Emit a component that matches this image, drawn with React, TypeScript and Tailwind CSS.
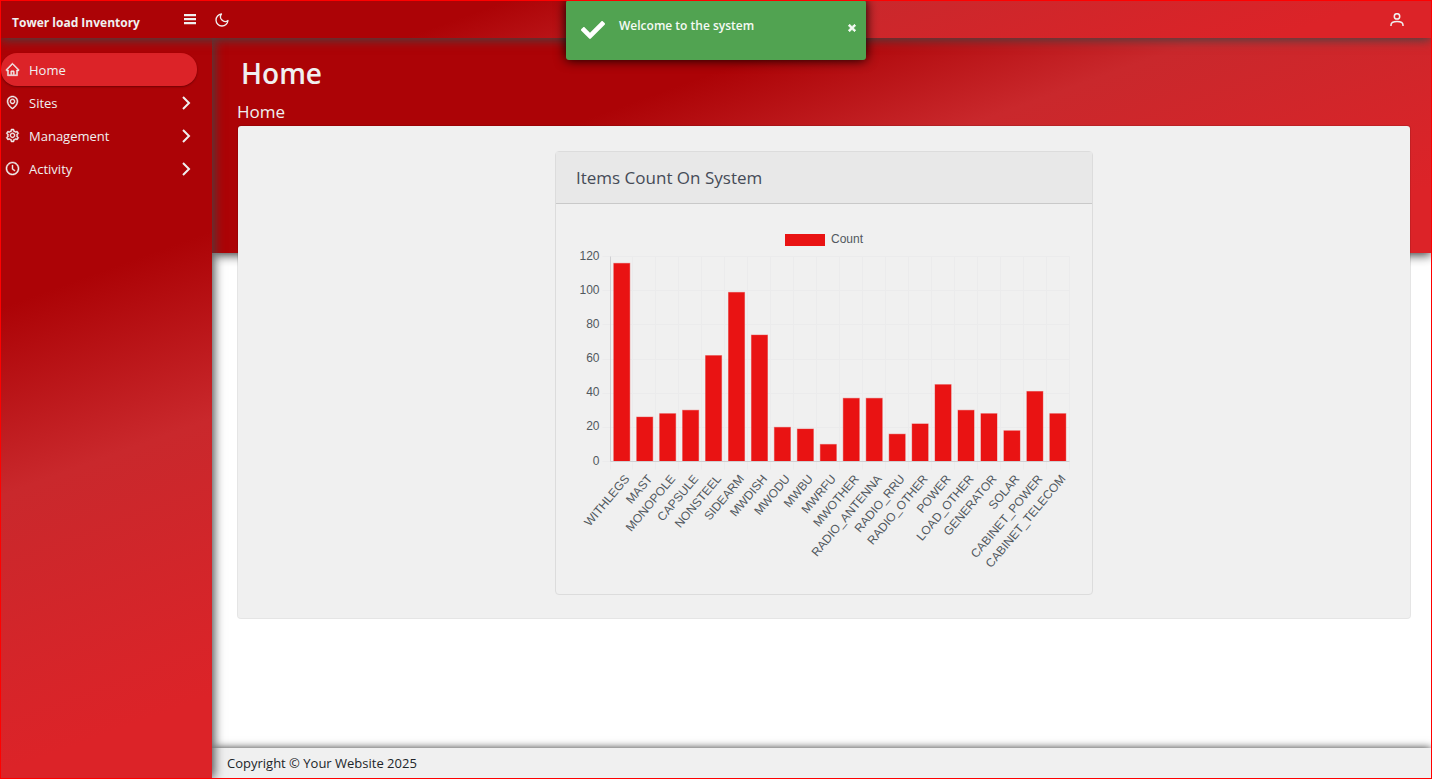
import React from "react";
import {
  AiOutlineHome,
  AiOutlineEnvironment,
  AiOutlineSetting,
  AiOutlineClockCircle,
} from "react-icons/ai";
import { FiMoon } from "react-icons/fi";
import { FaCheck, FaTimes } from "react-icons/fa";

const navItems = [
  { label: "Home", icon: AiOutlineHome, active: true },
  { label: "Sites", icon: AiOutlineEnvironment, active: false },
  { label: "Management", icon: AiOutlineSetting, active: false },
  { label: "Activity", icon: AiOutlineClockCircle, active: false },
];

const counts: [string, number][] = [
  ["WITHLEGS", 116],
  ["MAST", 26],
  ["MONOPOLE", 28],
  ["CAPSULE", 30],
  ["NONSTEEL", 62],
  ["SIDEARM", 99],
  ["MWDISH", 74],
  ["MWODU", 20],
  ["MWBU", 19],
  ["MWRFU", 10],
  ["MWOTHER", 37],
  ["RADIO_ANTENNA", 37],
  ["RADIO_RRU", 16],
  ["RADIO_OTHER", 22],
  ["POWER", 45],
  ["LOAD_OTHER", 30],
  ["GENERATOR", 28],
  ["SOLAR", 18],
  ["CABINET_POWER", 41],
  ["CABINET_TELECOM", 28],
];

const ticks = [0, 20, 40, 60, 80, 100, 120];

function Chart() {
  const left = 34.5;
  const right = 493.5;
  const top = 32.5;
  const bottom = 237.5;
  const step = (right - left) / counts.length;
  const y = (v: number) => bottom - (v / 120) * (bottom - top);
  const barWidth = step * 0.7;

  return (
    <svg
      viewBox="0 0 496 350"
      className="block w-full font-['Liberation_Sans',Arial,sans-serif] text-xs"
      role="img"
      aria-label="Items count by type"
    >
      <rect x="209" y="10" width="40" height="12" fill="#e91313" />
      <text x="255" y="19" fill="#51585e">
        Count
      </text>
      {ticks.map((t) => (
        <g key={t}>
          <line
            x1={left - 8}
            x2={right}
            y1={Math.floor(y(t)) + 0.5}
            y2={Math.floor(y(t)) + 0.5}
            stroke="#ebebec"
          />
          <text x={left - 11} y={Math.round(y(t) + 3)} textAnchor="end" fill="#51585e">
            {t}
          </text>
        </g>
      ))}
      {counts.concat([["", 0]]).map((_, i) => {
        const x = Math.round(left + i * step) - 0.5;
        return <line key={i} x1={x} x2={x} y1={top} y2={bottom + 8} stroke="#ebebec" />;
      })}
      {counts.map(([label, value], i) => {
        const cx = left + (i + 0.5) * step;
        return (
          <g key={label}>
            <rect
              x={cx - barWidth / 2 - 0.2}
              y={y(value)}
              width={barWidth}
              height={bottom - y(value)}
              fill="#e91313"
              stroke="#e91313"
              strokeOpacity="0.4"
            />
            <text
              transform={`translate(${cx + 5} ${bottom + 15}) rotate(-50)`}
              textAnchor="end"
              dominantBaseline="central"
              fill="#51585e"
            >
              {label}
            </text>
          </g>
        );
      })}
      <path d={`M${left} ${top}V${bottom}H${right}`} fill="none" stroke="#cfcfd2" />
    </svg>
  );
}

export default function App() {
  return (
    <div className="relative flex min-h-screen flex-col bg-white p-px font-['Open_Sans','Noto_Sans',sans-serif] text-[#f0f0f0]">
      <header className="relative z-20 flex h-[37px] items-center bg-[linear-gradient(160deg,#ac0306_33%,#c9282c_55%,#dc2328_90%)] shadow-[0_2px_10px_#444]">
        <a href="#" className="w-[182px] pt-1.5 pl-[11px] text-xs leading-5 font-bold whitespace-nowrap">
          Tower load Inventory
        </a>
        <div className="flex flex-1 items-center gap-[17px] pr-[27px]">
          <button type="button" aria-label="Toggle menu">
            <svg viewBox="0 0 14 14" width="14" height="14" fill="currentColor">
              <path d="M1 1h12v2.2H1zM1 5h12v2.2H1zM1 9h12v2.2H1z" />
            </svg>
          </button>
          <button type="button" aria-label="Dark mode">
            <FiMoon size={16} />
          </button>
          <button type="button" aria-label="Account" className="ml-auto">
            <svg viewBox="0 0 14 14" width="14" height="14" fill="none" stroke="currentColor" strokeWidth="1.5">
              <circle cx="7" cy="3.4" r="2.7" />
              <path d="M1 12.9v-.8C1 9.5 3.6 8.6 7 8.600s6 .9 6 3.500v.8" />
            </svg>
          </button>
        </div>
      </header>

      <div className="flex flex-1">
        <nav className="relative z-10 w-[211px] shrink-0 bg-[linear-gradient(160deg,#ac0306_33%,#c9282c_56%,#dc2328_90%)] pt-[15px] shadow-[2px_0_10px_#444]">
          <ul>
            {navItems.map(({ label, icon: Icon, active }) => (
              <li key={label}>
                <a
                  href="#"
                  className={
                    active
                      ? "mr-[15px] flex h-[33px] items-center rounded-2xl bg-[#dc2328] pr-1.5 pl-1 text-[13px] shadow-[0_1px_2px_rgba(0,0,0,0.35)]"
                      : "mr-[15px] flex h-[33px] items-center pr-1.5 pl-1 text-[13px]"
                  }
                >
                  <Icon size={15} stroke="currentColor" strokeWidth={32} />
                  <span className="ml-[9px] flex-1 pt-0.5">{label}</span>
                  {!active && (
                    <svg viewBox="0 0 10 14" width="10" height="14" fill="none" stroke="currentColor" strokeWidth="2">
                      <path d="M2 1l6 6-6 6" />
                    </svg>
                  )}
                </a>
              </li>
            ))}
          </ul>
        </nav>

        <div className="flex min-w-0 flex-1 flex-col">
          <main className="grid flex-1 grid-cols-1 items-start">
            <div className="col-start-1 row-start-1 h-[215px] bg-[linear-gradient(160deg,#ac0306_33%,#c9282c_55%,#dc2328_90%)] shadow-[0_2px_10px_#333]" />
            <div className="relative col-start-1 row-start-1 pr-5 pl-[25px]">
              <h1 className="pt-[15px] pl-1 text-[28px] leading-10 font-semibold">Home</h1>
              <p className="pt-[7px] pb-px text-[17px] leading-6">Home</p>
              <section className="rounded border border-black/10 bg-[#f0f0f0] bg-clip-padding px-5 pt-[25px] pb-[23px]">
                <div className="mx-auto max-w-[538px] rounded border border-[#dcdcdc]">
                  <h2 className="border-b border-[#c9c9c9] bg-[#e8e8e8] px-5 py-3 text-[17px] leading-[27px] font-normal text-[#454b57]">
                    Items Count On System
                  </h2>
                  <div className="p-5">
                    <Chart />
                  </div>
                </div>
              </section>
            </div>
          </main>
          <footer className="bg-[#f0f0f0] px-[15px] py-[5px] text-[13px] leading-5 text-[#212529] shadow-[0_0_8px_#333]">
            Copyright © Your Website 2025
          </footer>
        </div>
      </div>

      <div
        role="status"
        className="absolute top-0 left-1/2 z-30 flex h-[60px] w-[300px] -translate-x-1/2 items-start rounded-[3px] bg-[#51a351] pt-4 pr-[9px] pl-[15px] text-[#f5faf5] shadow-[0_0_12px_#000]"
      >
        <FaCheck size={24} className="mt-0.5 shrink-0 text-white" />
        <span className="ml-[14px] flex-1 text-xs leading-5 font-semibold">Welcome to the system</span>
        <button type="button" aria-label="Close" className="mt-[7px]">
          <FaTimes size={10} stroke="currentColor" strokeWidth={50} />
        </button>
      </div>

      <div className="pointer-events-none absolute inset-0 z-40 border border-[#ff0000]" />
    </div>
  );
}
